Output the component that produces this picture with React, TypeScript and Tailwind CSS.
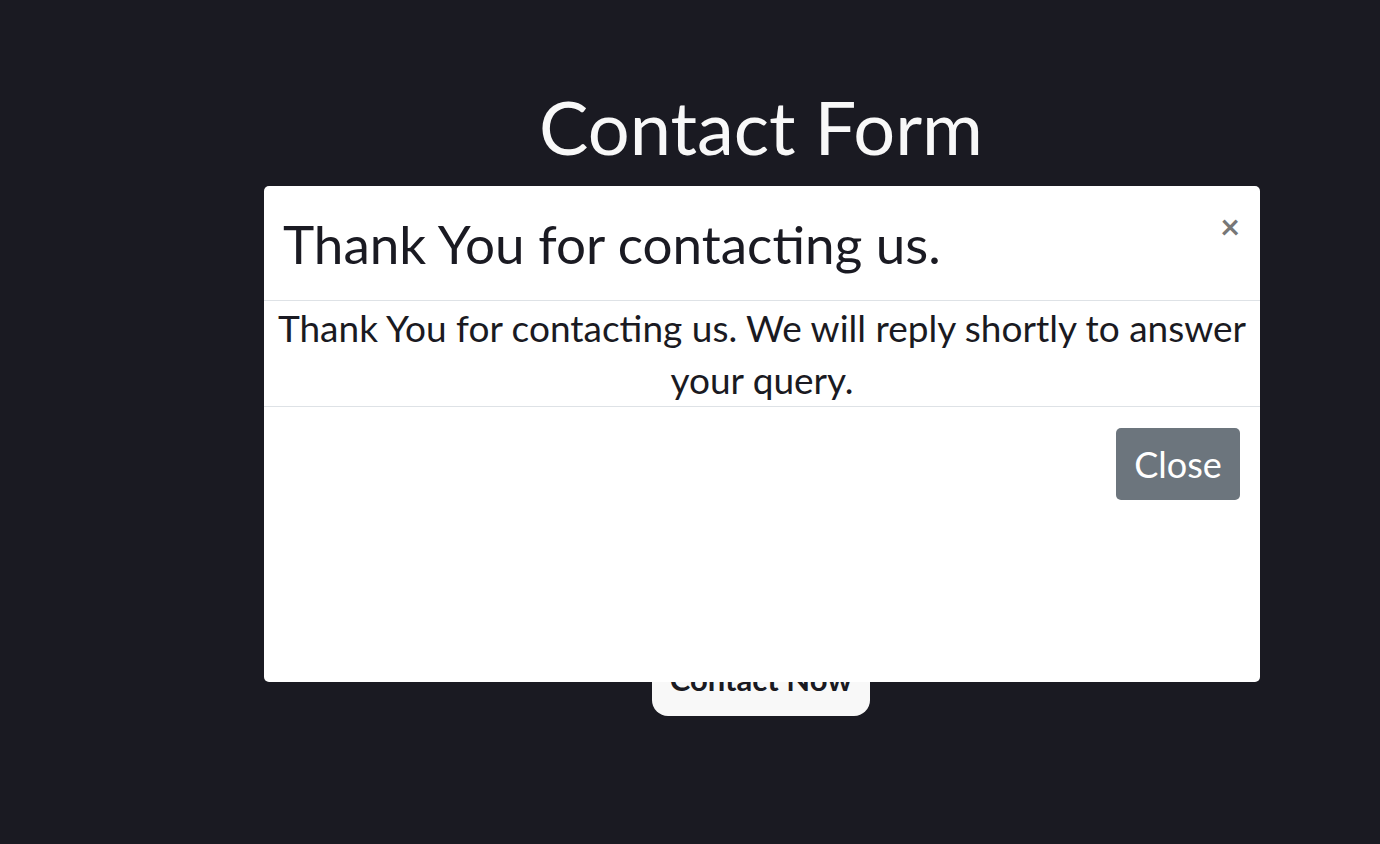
export default function App() {
  return (
    <div className="relative min-h-screen bg-[#1a1a22] font-['Lato','Noto_Sans',sans-serif]">
      {/* page content behind the modal */}
      <main className="flex flex-col items-center pl-[142px] pt-[88px]">
        <h1 className="text-[74px] leading-[78px] text-[#f8f8f8]">Contact Form</h1>
        <div className="h-[478px]" />
        <button
          type="button"
          className="h-[72px] w-[218px] rounded-[16px] bg-[#f8f8f8] pb-[2px] text-[31px] font-bold text-[#1a1a22]"
        >
          Contact Now
        </button>
      </main>

      {/* success modal */}
      <div className="fixed inset-0 pl-[264px] pt-[186px]">
        <div className="flex h-[496px] w-[996px] flex-col rounded-[5px] bg-white text-[#1a1a22]">
          <div className="flex h-[115px] items-start justify-between border-b border-[#dee2e6] pl-[19px] pr-[20px]">
            <h5 className="mt-[28px] text-[53px] leading-[60px]">Thank You for contacting us.</h5>
            <button type="button" className="mt-[20px] text-[34px] font-bold leading-[40px] text-[#777]">
              ×
            </button>
          </div>
          <div className="border-b border-[#dee2e6] px-[12px] pt-[1px] text-center text-[37px] leading-[52px]">
            Thank You for contacting us. We will reply shortly to answer
            <br />
            your query.
          </div>
          <div className="flex justify-end px-[20px] pt-[21px]">
            <button
              type="button"
              className="h-[72px] w-[124px] rounded-[5px] bg-[#6c757d] text-[36px] text-white"
            >
              Close
            </button>
          </div>
        </div>
      </div>
    </div>
  );
}
